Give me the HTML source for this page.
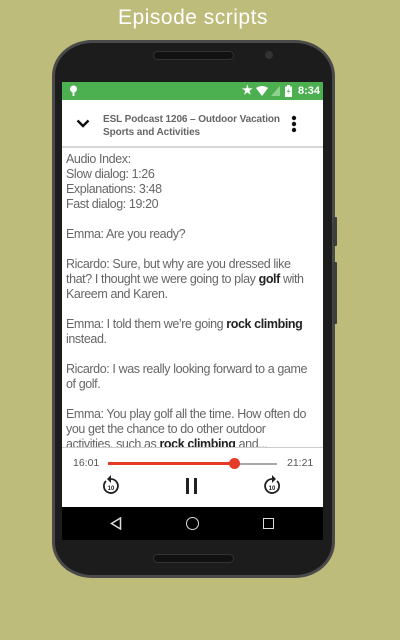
<!DOCTYPE html>
<html><head><meta charset="utf-8"><style>
*{margin:0;padding:0;box-sizing:border-box}
body{width:400px;height:640px;background:#bdbc7b;position:relative;overflow:hidden;font-family:"Liberation Sans",sans-serif}
.title{position:absolute;top:6px;left:0;width:386px;text-align:center;color:#fff;font-size:21px;letter-spacing:0.5px}
.phone{position:absolute;left:52px;top:40px;width:283px;height:538px;background:#1c1c1c;border-radius:40px/36px;border:3px solid #4a4a4a}
.btn{position:absolute;background:#3d3d3d;left:333px;width:4px;border-radius:1px}
.speaker{position:absolute;left:153px;top:51px;width:81px;height:9px;border-radius:5px;background:#111;border:1px solid #333}
.cam{position:absolute;left:265px;top:51px;width:8px;height:8px;border-radius:50%;background:#333}
.speaker2{position:absolute;left:153px;top:554px;width:81px;height:9px;border-radius:5px;background:#111;border:1px solid #333}
.screen{position:absolute;left:62px;top:82px;width:261px;height:458px;background:#fff;overflow:hidden}
.status{height:18px;background:#4caf50;position:relative;color:#fff;font-size:11px;font-weight:bold}
.header{height:48px;position:relative;border-bottom:2px solid #d6d6d6}
.htitle{position:absolute;left:41px;top:13px;font-size:10px;font-weight:bold;color:#666;line-height:13px;letter-spacing:-0.1px}
.text{position:absolute;top:70px;left:4px;right:4px;font-size:12.5px;line-height:15px;color:#666;letter-spacing:-0.4px;white-space:nowrap}
.text b{color:#222}
.player{position:absolute;top:365px;left:0;width:261px;height:60px;background:#fff;border-top:1px solid #ccc}
.nav{position:absolute;top:425px;left:0;width:261px;height:33px;background:#000}
</style></head><body>
<div class="title">Episode scripts</div>
<div class="phone"></div>
<div class="btn" style="top:217px;height:29px"></div>
<div class="btn" style="top:262px;height:62px"></div>
<div class="speaker"></div><div class="cam"></div><div class="speaker2"></div>
<div class="screen">
 <div class="status">
  <svg style="position:absolute;left:7px;top:3px" width="9" height="12" viewBox="0 0 9 12"><circle cx="4.5" cy="4" r="3.5" fill="#fff"/><rect x="3.5" y="6" width="2" height="5" fill="#fff"/></svg>
  <span style="position:absolute;left:180px;top:1px;font-size:12px">★</span>
  <svg style="position:absolute;left:194px;top:4px" width="12" height="10" viewBox="0 0 12 10"><path d="M0 2Q6-2 12 2L6 10Z" fill="#fff"/></svg>
  <svg style="position:absolute;left:209px;top:4px" width="9" height="10" viewBox="0 0 9 10"><path d="M9 0V10H0Z" fill="#8fd18f"/></svg>
  <svg style="position:absolute;left:223px;top:3px" width="7" height="12" viewBox="0 0 7 12"><rect x="2" y="0" width="3" height="2" fill="#fff"/><rect x="0" y="1.5" width="7" height="10.5" fill="#fff"/><path d="M4 3L2 7H4L3 10L5 6H3.5Z" fill="#4caf50"/></svg>
  <span style="position:absolute;left:236px;top:3px">8:34</span>
 </div>
 <div class="header">
  <svg style="position:absolute;left:14px;top:19px" width="14" height="9" viewBox="0 0 14 9"><path d="M1.5 1.5L7 7L12.5 1.5" stroke="#111" stroke-width="2.4" fill="none"/></svg>
  <div class="htitle">ESL Podcast 1206 – Outdoor Vacation<br>Sports and Activities</div>
  <svg style="position:absolute;left:229px;top:15px" width="6" height="18" viewBox="0 0 6 18"><circle cx="3" cy="3" r="2.2" fill="#111"/><circle cx="3" cy="9" r="2.2" fill="#111"/><circle cx="3" cy="15" r="2.2" fill="#111"/></svg>
 </div>
 <div class="text">Audio Index:<br>Slow dialog: 1:26<br>Explanations: 3:48<br>Fast dialog: 19:20<br><br>Emma: Are you ready?<br><br>Ricardo: Sure, but why are you dressed like<br>that? I thought we were going to play <b>golf</b> with<br>Kareem and Karen.<br><br>Emma: I told them we’re going <b>rock climbing</b><br>instead.<br><br>Ricardo: I was really looking forward to a game<br>of golf.<br><br>Emma: You play golf all the time. How often do<br>you get the chance to do other outdoor<br>activities, such as <b>rock climbing</b> and...</div>
 <div class="player">
  <span style="position:absolute;left:11px;top:9px;font-size:10.5px;color:#555">16:01</span>
  <span style="position:absolute;left:225px;top:9px;font-size:10.5px;color:#555">21:21</span>
  <div style="position:absolute;left:46px;top:15px;width:169px;height:2px;background:#aaa"></div>
  <div style="position:absolute;left:46px;top:14px;width:126px;height:3px;background:#e53a25"></div>
  <div style="position:absolute;left:167px;top:10px;width:11px;height:11px;border-radius:50%;background:#e53a25"></div>
  <svg style="position:absolute;left:39px;top:26px" width="20" height="22" viewBox="0 0 20 22"><path d="M5 7A7 7 0 1 0 10 5" stroke="#222" stroke-width="1.8" fill="none"/><path d="M10 1L6 5L10 9Z" fill="#222"/><text x="10" y="16" font-size="6" font-weight="bold" text-anchor="middle" fill="#222" font-family="Liberation Sans">10</text></svg>
  <div style="position:absolute;left:124px;top:30px;width:3px;height:16px;background:#222"></div>
  <div style="position:absolute;left:132px;top:30px;width:3px;height:16px;background:#222"></div>
  <svg style="position:absolute;left:200px;top:26px" width="20" height="22" viewBox="0 0 20 22"><path d="M15 7A7 7 0 1 1 10 5" stroke="#222" stroke-width="1.8" fill="none"/><path d="M10 1L14 5L10 9Z" fill="#222"/><text x="10" y="16" font-size="6" font-weight="bold" text-anchor="middle" fill="#222" font-family="Liberation Sans">10</text></svg>
 </div>
 <div class="nav">
  <svg style="position:absolute;left:48px;top:10px" width="12" height="13" viewBox="0 0 12 13"><path d="M10.5 1L1.5 6.5L10.5 12Z" stroke="#ddd" stroke-width="1.5" fill="none"/></svg>
  <div style="position:absolute;left:124px;top:10px;width:13px;height:13px;border-radius:50%;border:1.6px solid #ddd"></div>
  <div style="position:absolute;left:201px;top:11px;width:11px;height:11px;border:1.6px solid #ddd"></div>
 </div>
</div>
</body></html>
